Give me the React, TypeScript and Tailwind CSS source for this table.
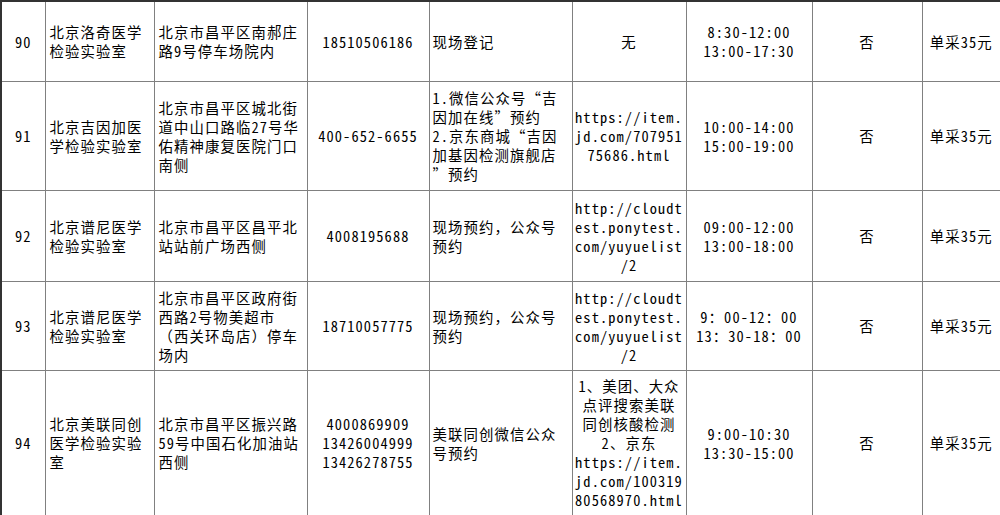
const font = {
  fontFamily:
    '"Noto Sans Mono CJK SC", "Noto Sans CJK SC", "Liberation Sans", sans-serif',
};

type Row = {
  no: string;
  name: string[];
  address: string[];
  phone: string[];
  booking: string[];
  url: string[];
  hours: string[];
  h: string;
};

const rows: Row[] = [
  {
    no: '90',
    name: ['北京洛奇医学', '检验实验室'],
    address: ['北京市昌平区南郝庄', '路9号停车场院内'],
    phone: ['18510506186'],
    booking: ['现场登记'],
    url: ['无'],
    hours: ['8:30-12:00', '13:00-17:30'],
    h: 'h-[80px]',
  },
  {
    no: '91',
    name: ['北京吉因加医', '学检验实验室'],
    address: ['北京市昌平区城北街', '道中山口路临27号华', '佑精神康复医院门口', '南侧'],
    phone: ['400-652-6655'],
    booking: ['1.微信公众号“吉', '因加在线”预约', '2.京东商城“吉因', '加基因检测旗舰店', '”预约'],
    url: ['https://item.', 'jd.com/707951', '75686.html'],
    hours: ['10:00-14:00', '15:00-19:00'],
    h: 'h-[109px]',
  },
  {
    no: '92',
    name: ['北京谱尼医学', '检验实验室'],
    address: ['北京市昌平区昌平北', '站站前广场西侧'],
    phone: ['4008195688'],
    booking: ['现场预约，公众号', '预约'],
    url: ['http://cloudt', 'est.ponytest.', 'com/yuyuelist', '/2'],
    hours: ['09:00-12:00', '13:00-18:00'],
    h: 'h-[91px]',
  },
  {
    no: '93',
    name: ['北京谱尼医学', '检验实验室'],
    address: ['北京市昌平区政府街', '西路2号物美超市', '（西关环岛店）停车', '场内'],
    phone: ['18710057775'],
    booking: ['现场预约，公众号', '预约'],
    url: ['http://cloudt', 'est.ponytest.', 'com/yuyuelist', '/2'],
    hours: ['9：00-12：00', '13：30-18：00'],
    h: 'h-[89px]',
  },
  {
    no: '94',
    name: ['北京美联同创', '医学检验实验', '室'],
    address: ['北京市昌平区振兴路', '59号中国石化加油站', '西侧'],
    phone: ['4000869909', '13426004999', '13426278755'],
    booking: ['美联同创微信公众', '号预约'],
    url: [
      '1、美团、大众',
      '点评搜索美联',
      '同创核酸检测',
      '2、京东',
      'https://item.',
      'jd.com/100319',
      '80568970.html',
    ],
    hours: ['9:00-10:30', '13:30-15:00'],
    h: 'h-[146px]',
  },
];

function Lines({ lines }: { lines: string[] }) {
  return (
    <>
      {lines.map((l, i) => (
        <div key={i} className="whitespace-nowrap">
          {l}
        </div>
      ))}
    </>
  );
}

const cell = 'border border-[#808080] align-middle p-0';

export default function App() {
  return (
    <div className="w-[1000px] h-[515px] bg-white overflow-hidden">
      <table
        style={font}
        className="w-[1000px] table-fixed border-collapse border-2 border-[#333] text-[14.4px] leading-[19px] tracking-[1.1px] text-black font-medium"
      >
        <colgroup>
          <col className="w-[44px]" />
          <col className="w-[109px]" />
          <col className="w-[153px]" />
          <col className="w-[122px]" />
          <col className="w-[143px]" />
          <col className="w-[114px]" />
          <col className="w-[126px]" />
          <col className="w-[110px]" />
          <col className="w-[79px]" />
        </colgroup>
        <tbody>
          {rows.map((r) => (
            <tr key={r.no} className={r.h}>
              <td className={`${cell} text-center`}>{r.no}</td>
              <td className={`${cell} pl-[4px]`}>
                <Lines lines={r.name} />
              </td>
              <td className={`${cell} pl-[4px]`}>
                <Lines lines={r.address} />
              </td>
              <td className={`${cell} text-center`}>
                <Lines lines={r.phone} />
              </td>
              <td className={`${cell} pl-[3px]`}>
                <Lines lines={r.booking} />
              </td>
              <td className={`${cell} text-center`}>
                <Lines lines={r.url} />
              </td>
              <td className={`${cell} text-center`}>
                <Lines lines={r.hours} />
              </td>
              <td className={`${cell} text-center`}>否</td>
              <td className={`${cell} text-center`}>单采35元</td>
            </tr>
          ))}
        </tbody>
      </table>
    </div>
  );
}
